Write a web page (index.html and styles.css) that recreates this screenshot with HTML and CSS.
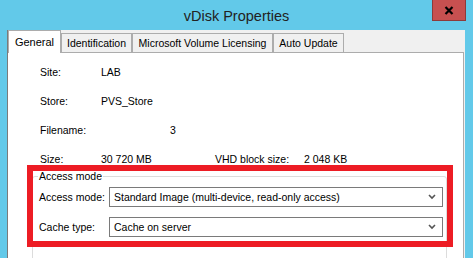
FILE: index.html
```html
<!DOCTYPE html>
<html>
<head>
<meta charset="utf-8">
<title>vDisk Properties</title>
<link rel="stylesheet" href="styles.css">
</head>
<body>
<div class="window">
  <div class="titlebar">
    <div class="title">vDisk Properties</div>
    <div class="close">
      <svg width="10" height="9" viewBox="0 0 10 9"><path d="M1.5 1 L8.5 8 M8.5 1 L1.5 8" stroke="#000" stroke-width="2.2" fill="none"/></svg>
    </div>
  </div>
  <div class="client">
    <div class="tabs">
      <div class="tab active tab-general">General</div>
      <div class="tab tab-ident">Identification</div>
      <div class="tab tab-msvl">Microsoft Volume Licensing</div>
      <div class="tab tab-auto">Auto Update</div>
    </div>
    <div class="page">
      <div class="info">
        <span class="lbl">Site:</span><span class="val">LAB</span><span></span><span></span>
        <span class="lbl">Store:</span><span class="val">PVS_Store</span><span></span><span></span>
        <span class="lbl">Filename:</span><span class="val filename">3</span><span></span><span></span>
        <span class="lbl">Size:</span><span class="val">30 720 MB</span><span class="lbl">VHD block size:</span><span class="val">2 048 KB</span>
      </div>
      <fieldset class="group">
        <legend>Access mode</legend>
        <div class="field field-first">
          <span class="flabel">Access mode:</span>
          <div class="combo"><span>Standard Image (multi-device, read-only access)</span>
            <svg class="chev" width="8" height="6" viewBox="0 0 8 6"><path d="M1 1 L4 4 L7 1" stroke="#555" stroke-width="1.6" fill="none"/></svg></div>
        </div>
        <div class="field">
          <span class="flabel">Cache type:</span>
          <div class="combo"><span>Cache on server</span>
            <svg class="chev" width="8" height="6" viewBox="0 0 8 6"><path d="M1 1 L4 4 L7 1" stroke="#555" stroke-width="1.6" fill="none"/></svg></div>
        </div>
      </fieldset>
      <div class="highlight"></div>
    </div>
  </div>
</div>
</body>
</html>
```
FILE: styles.css
```css
html, body {
  margin: 0;
  padding: 0;
}
body {
  background: #62C9E9;
  font-family: "Liberation Sans", Arial, sans-serif;
  font-size: 10.5px;
  color: #000;
  overflow: hidden;
}
.window {
  width: 473px;
  height: 258px;
  display: flex;
  flex-direction: column;
}
.titlebar {
  height: 30px;
  flex: none;
  display: grid;
  grid-template-columns: 41px 1fr 34px;
  padding-right: 7px;
  align-items: start;
}
.title {
  grid-column: 2;
  text-align: center;
  font-size: 14.5px;
  line-height: 32px;
  color: #222;
}
.close {
  grid-column: 3;
  height: 21px;
  box-sizing: border-box;
  background: #C75050;
  border: 1px solid #8E3A3A;
  border-top: none;
  display: flex;
  align-items: center;
  justify-content: center;
}
.client {
  flex: 1;
  margin: 0 8px 0 7px;
  background: #F0F0F0;
  border-left: 1px solid #7A7A7A;
  display: flex;
  flex-direction: column;
  min-height: 0;
}
.tabs {
  height: 22px;
  flex: none;
  display: flex;
  align-items: flex-end;
  position: relative;
  z-index: 1;
}
.tab {
  box-sizing: border-box;
  height: 19px;
  border: 1px solid #ACACAC;
  border-bottom: none;
  background: #F0F0F0;
  text-align: center;
  line-height: 18px;
}
.tab.active {
  height: 23px;
  margin-bottom: -1px;
  background: #fff;
  line-height: 22px;
  font-size: 11px;
}
.tab-general { width: 53px; }
.tab-ident { width: 71px; }
.tab-msvl { width: 141px; }
.tab-auto { width: 71px; }
.page {
  flex: 1;
  position: relative;
  background: #fff;
  border: 1px solid #ACACAC;
  border-left: none;
  border-bottom: none;
  margin-right: 1px;
  overflow: hidden;
}
.info {
  display: grid;
  grid-template-columns: 61px 114px 89px auto;
  grid-auto-rows: 12px;
  row-gap: 17px;
  line-height: 12px;
  padding: 13px 0 0 32px;
}
.filename {
  padding-left: 69px;
}
.group {
  margin: 5px 16px 0 24px;
  padding: 0 3px 40px 6px;
  border: 1px solid #DCDCDC;
  border-radius: 3px;
}
.group legend {
  margin-left: -1px;
  padding: 0 1px;
  line-height: 12px;
}
.field {
  display: flex;
  align-items: center;
  margin-top: 10px;
}
.field-first {
  margin-top: 5px;
}
.flabel {
  width: 70px;
  flex: none;
}
.combo {
  flex: 1;
  height: 20px;
  box-sizing: border-box;
  border: 1px solid #7A7A7A;
  background: #fff;
  display: flex;
  align-items: center;
  justify-content: space-between;
  padding: 0 6px 0 4px;
}
.chev {
  display: block;
}
.highlight {
  position: absolute;
  left: 19px;
  top: 112px;
  width: 426px;
  height: 82px;
  box-sizing: border-box;
  border: 6px solid #ED1C24;
  pointer-events: none;
}
```
